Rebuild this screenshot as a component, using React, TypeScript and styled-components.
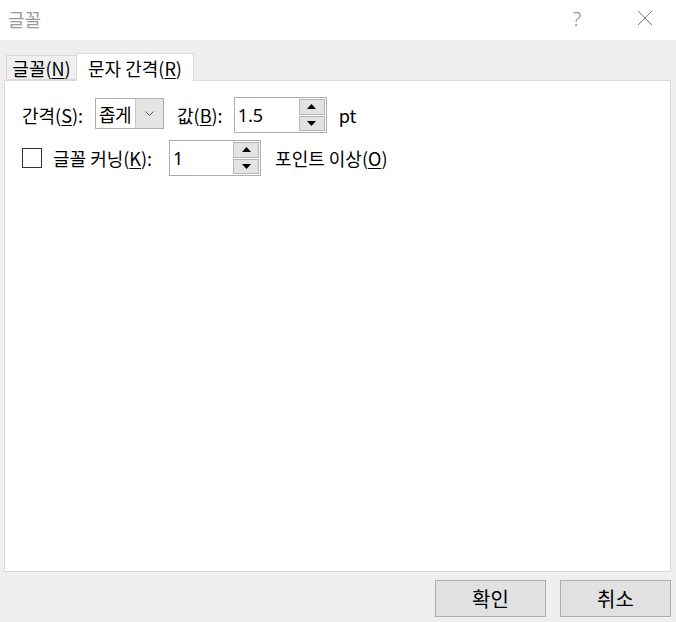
import React from "react";
import styled, { createGlobalStyle } from "styled-components";

const GlobalStyle = createGlobalStyle`
  html, body {
    margin: 0;
    padding: 0;
    background: #efefef;
  }
  body {
    font-family: "Noto Sans", "Noto Sans CJK KR", sans-serif;
    font-size: 18px;
    color: #000;
  }
`;

const Window = styled.div`
  display: flex;
  flex-direction: column;
  width: 676px;
  height: 622px;
  background: #efefef;
`;

const TitleBar = styled.div`
  display: flex;
  align-items: center;
  height: 40px;
  padding-left: 8px;
  background: #fff;
  box-sizing: border-box;
`;

const Title = styled.span`
  flex: 1;
  font-family: "Noto Sans CJK KR", sans-serif;
  font-size: 18px;
  color: #9a9a9a;
  margin-top: -3px;
`;

const TitleAction = styled.span`
  display: flex;
  align-items: center;
  justify-content: center;
  width: 46px;
  height: 34px;
  color: #8a8a8a;
  font-family: "Noto Sans", sans-serif;
  font-size: 20px;
  font-weight: 300;
  margin-top: -4px;
`;

const Body = styled.div`
  display: flex;
  flex-direction: column;
  flex: 1;
  padding: 13px 5px 0 4px;
`;

const TabStrip = styled.div`
  display: flex;
  align-items: flex-end;
  height: 27px;
  padding-left: 2px;
  position: relative;
  z-index: 1;
`;

const Tab = styled.div<{ $active?: boolean }>`
  display: flex;
  align-items: center;
  justify-content: center;
  box-sizing: border-box;
  border: 1px solid #d9d9d9;
  border-bottom: ${(p) => (p.$active ? "none" : "1px solid #d9d9d9")};
  background: ${(p) => (p.$active ? "#fff" : "#efefef")};
  height: ${(p) => (p.$active ? "28px" : "25px")};
  width: ${(p) => (p.$active ? "118px" : "71px")};
  margin-left: ${(p) => (p.$active ? "-1px" : "0")};
  margin-bottom: ${(p) => (p.$active ? "-1px" : "0")};
  padding-top: ${(p) => (p.$active ? "1px" : "0")};
  font-family: "Noto Sans CJK KR", sans-serif;
  font-size: 18px;
  white-space: nowrap;
`;

const Panel = styled.div`
  flex: 1;
  display: flex;
  flex-direction: column;
  gap: 7px;
  background: #fff;
  border: 1px solid #d9d9d9;
  padding: 16px 0 0 17px;
`;

const Row = styled.div`
  display: flex;
  align-items: center;
  height: 36px;
`;

const Label = styled.span<{ $mr?: number; $ml?: number }>`
  font-family: "Noto Sans CJK KR", sans-serif;
  font-size: 18px;
  white-space: nowrap;
  margin-right: ${(p) => p.$mr ?? 0}px;
  margin-left: ${(p) => p.$ml ?? 0}px;
`;

const Key = styled.span`
  text-decoration: underline;
  text-decoration-thickness: 1px;
  text-underline-offset: 2px;
`;

const Select = styled.div`
  display: flex;
  align-self: flex-start;
  margin-top: 1px;
  box-sizing: border-box;
  width: 69px;
  height: 31px;
  border: 1px solid #adadad;
  background: #fff;
`;

const SelectValue = styled.span`
  flex: 1;
  display: flex;
  align-items: center;
  padding-left: 3px;
  font-family: "Noto Sans CJK KR", sans-serif;
  font-size: 18px;
  letter-spacing: -0.5px;
`;

const SelectArrow = styled.span`
  display: flex;
  align-items: center;
  justify-content: center;
  width: 27px;
  background: #e5e5e5;
  border-left: 1px solid #c8c8c8;
`;

const Spin = styled.div<{ $w: number }>`
  display: flex;
  box-sizing: border-box;
  width: ${(p) => p.$w}px;
  height: 36px;
  border: 1px solid #adadad;
  background: #fff;
`;

const SpinValue = styled.span`
  flex: 1;
  display: flex;
  align-items: center;
  padding-left: 3px;
  font-family: "Noto Sans", sans-serif;
  font-size: 18px;
`;

const SpinButtons = styled.div`
  display: flex;
  flex-direction: column;
  width: 27px;
  padding: 1px 1px 1px 0;
  gap: 1px;
  box-sizing: border-box;
`;

const SpinButton = styled.span`
  flex: 1;
  display: flex;
  align-items: center;
  justify-content: center;
  background: #e3e3e3;
  border: 1px solid #b5b5b5;
`;

const Checkbox = styled.span`
  box-sizing: border-box;
  width: 20px;
  height: 20px;
  border: 1px solid #333;
  background: #fff;
  margin: 0 11px 0 0;
`;

const Footer = styled.div`
  display: flex;
  justify-content: flex-end;
  gap: 14px;
  padding: 8px 0 5px;
`;

const Button = styled.button`
  box-sizing: border-box;
  width: 111px;
  height: 37px;
  background: #e1e1e1;
  border: 1px solid #adadad;
  font-family: "Noto Sans CJK KR", sans-serif;
  font-size: 20px;
  color: #000;
  padding: 0;
`;

const Up = () => (
  <svg width="9" height="5" viewBox="0 0 9 5">
    <path d="M0 5 L4.5 0 L9 5 Z" fill="#000" />
  </svg>
);

const Down = () => (
  <svg width="9" height="5" viewBox="0 0 9 5">
    <path d="M0 0 L4.5 5 L9 0 Z" fill="#000" />
  </svg>
);

const SpinBox: React.FC<{ value: string; width: number }> = ({ value, width }) => (
  <Spin $w={width}>
    <SpinValue>{value}</SpinValue>
    <SpinButtons>
      <SpinButton>
        <Up />
      </SpinButton>
      <SpinButton>
        <Down />
      </SpinButton>
    </SpinButtons>
  </Spin>
);

export default function App() {
  return (
    <>
      <GlobalStyle />
      <Window>
        <TitleBar>
          <Title>글꼴</Title>
          <TitleAction>?</TitleAction>
          <TitleAction style={{ marginLeft: 22, marginRight: 8 }}>
            <svg width="16" height="16" viewBox="0 0 16 16">
              <path d="M1 1 L15 15 M15 1 L1 15" stroke="#777" strokeWidth="1" />
            </svg>
          </TitleAction>
        </TitleBar>
        <Body>
          <TabStrip>
            <Tab>
              글꼴(<Key>N</Key>)
            </Tab>
            <Tab $active>
              문자 간격(<Key>R</Key>)
            </Tab>
          </TabStrip>
          <Panel>
            <Row>
              <Label $mr={12}>
                간격(<Key>S</Key>):
              </Label>
              <Select>
                <SelectValue>좁게</SelectValue>
                <SelectArrow>
                  <svg width="9" height="5" viewBox="0 0 9 5">
                    <path d="M0.5 0.5 L4.5 4.5 L8.5 0.5" stroke="#555" strokeWidth="1" fill="none" />
                  </svg>
                </SelectArrow>
              </Select>
              <Label $ml={13} $mr={11}>
                값(<Key>B</Key>):
              </Label>
              <SpinBox value="1.5" width={93} />
              <Label $ml={12}>pt</Label>
            </Row>
            <Row>
              <Checkbox />
              <Label $mr={17}>
                글꼴 커닝(<Key>K</Key>):
              </Label>
              <SpinBox value="1" width={92} />
              <Label $ml={14}>
                포인트 이상(<Key>O</Key>)
              </Label>
            </Row>
          </Panel>
          <Footer>
            <Button>확인</Button>
            <Button>취소</Button>
          </Footer>
        </Body>
      </Window>
    </>
  );
}
